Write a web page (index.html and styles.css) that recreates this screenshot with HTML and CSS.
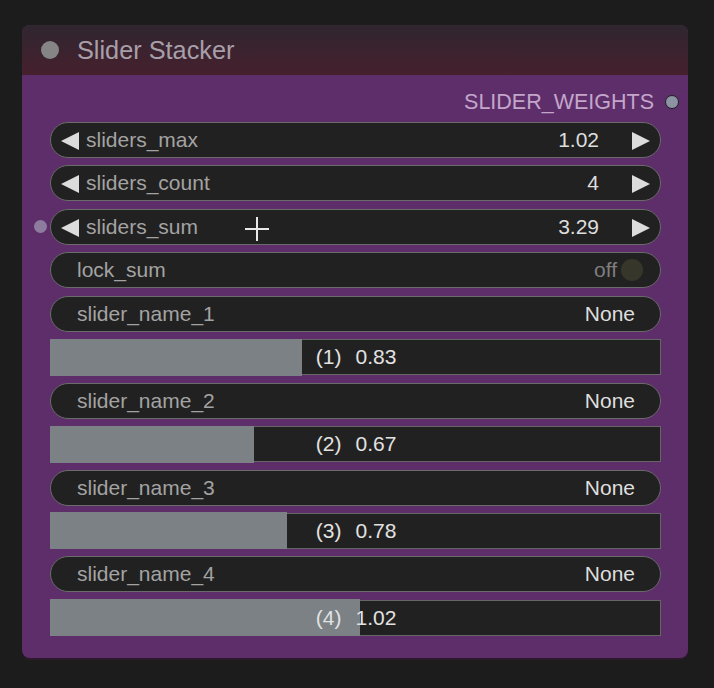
FILE: index.html
```html
<!DOCTYPE html>
<html>
<head>
<meta charset="utf-8">
<link rel="stylesheet" href="styles.css">
</head>
<body>
<div class="node">
  <div class="title">
    <span class="title-dot"></span>
    <span class="title-text">Slider Stacker</span>
  </div>
  <div class="body">
    <div class="output-row">
      <span class="output-label">SLIDER_WEIGHTS</span>
      <span class="output-dot"></span>
    </div>
    <div class="widgets">
      <div class="widget num">
        <svg class="arrow" viewBox="0 0 17 17"><polygon points="0,8.5 17,0 17,17"/></svg>
        <span class="label">sliders_max</span>
        <span class="value">1.02</span>
        <svg class="arrow" viewBox="0 0 17 17"><polygon points="17,8.5 0,0 0,17"/></svg>
      </div>
      <div class="widget num">
        <svg class="arrow" viewBox="0 0 17 17"><polygon points="0,8.5 17,0 17,17"/></svg>
        <span class="label">sliders_count</span>
        <span class="value">4</span>
        <svg class="arrow" viewBox="0 0 17 17"><polygon points="17,8.5 0,0 0,17"/></svg>
      </div>
      <div class="widget num has-input">
        <span class="input-dot"></span>
        <svg class="arrow" viewBox="0 0 17 17"><polygon points="0,8.5 17,0 17,17"/></svg>
        <span class="label">sliders_sum</span>
        <span class="value">3.29</span>
        <svg class="arrow" viewBox="0 0 17 17"><polygon points="17,8.5 0,0 0,17"/></svg>
      </div>
      <div class="widget plain">
        <span class="label">lock_sum</span>
        <span class="value off">off</span>
        <span class="toggle"></span>
      </div>
      <div class="widget plain">
        <span class="label">slider_name_1</span>
        <span class="value">None</span>
      </div>
      <div class="bar">
        <div class="fill" style="width:41.5%"></div>
        <div class="bar-text"><span class="bar-idx">(1)</span><span class="bar-val">0.83</span></div>
      </div>
      <div class="widget plain">
        <span class="label">slider_name_2</span>
        <span class="value">None</span>
      </div>
      <div class="bar">
        <div class="fill" style="width:33.5%"></div>
        <div class="bar-text"><span class="bar-idx">(2)</span><span class="bar-val">0.67</span></div>
      </div>
      <div class="widget plain">
        <span class="label">slider_name_3</span>
        <span class="value">None</span>
      </div>
      <div class="bar">
        <div class="fill" style="width:39%"></div>
        <div class="bar-text"><span class="bar-idx">(3)</span><span class="bar-val">0.78</span></div>
      </div>
      <div class="widget plain">
        <span class="label">slider_name_4</span>
        <span class="value">None</span>
      </div>
      <div class="bar">
        <div class="fill" style="width:51%"></div>
        <div class="bar-text"><span class="bar-idx">(4)</span><span class="bar-val">1.02</span></div>
      </div>
    </div>
  </div>
</div>
<svg class="cursor" viewBox="0 0 26 26"><path d="M13 1V25M1 13H25" stroke="#e8e8e8" stroke-width="2" fill="none"/></svg>
</body>
</html>
```
FILE: styles.css
```css
html, body {
  margin: 0;
  padding: 0;
}
body {
  background: #1c1c1c;
  width: 714px;
  height: 688px;
  overflow: hidden;
  font-family: "Liberation Sans", Arial, sans-serif;
  position: relative;
}
.node {
  margin: 25px 0 0 22px;
  width: 666px;
  height: 633px;
  border-radius: 8px;
  background: #5d2e6a;
  box-shadow: 0 2px 0 #2c1a2c;
  overflow: hidden;
}
.title {
  height: 50px;
  display: flex;
  align-items: center;
  padding-left: 19px;
  gap: 18px;
  background: linear-gradient(#2f2630, #46202d);
  box-sizing: border-box;
}
.title-dot {
  width: 18px;
  height: 18px;
  border-radius: 50%;
  background: #858585;
}
.title-text {
  font-size: 25.3px;
  color: #a79fa9;
  padding-top: 1px;
}
.body {
  padding: 0 27px 0 28px;
}
.output-row {
  height: 47px;
  padding-top: 7px;
  box-sizing: border-box;
  display: flex;
  align-items: center;
  justify-content: flex-end;
  margin-right: -18px;
  gap: 11px;
}
.output-label {
  font-size: 21.5px;
  color: #c4a6ca;
}
.output-dot {
  width: 12px;
  height: 12px;
  border-radius: 50%;
  background: #8d93a3;
  border: 1.5px solid #1e1e22;
}
.widgets {
  display: flex;
  flex-direction: column;
  gap: 7.45px;
}
.widget {
  height: 36px;
  box-sizing: border-box;
  border: 1.5px solid #6b6b6b;
  border-radius: 18px;
  background: #222121;
  display: flex;
  align-items: center;
  font-size: 21px;
  position: relative;
}
.widget.num {
  padding: 0 10px 0 10px;
}
.widget.plain {
  padding: 0 25px 0 26px;
}
.arrow {
  width: 18px;
  height: 18px;
  fill: #dcdcdc;
  flex: none;
  margin-top: 2px;
}
.label {
  color: #a3a3a3;
  flex: 1;
}
.num .label {
  margin-left: 7px;
}
.value {
  color: #dedede;
}
.num .value {
  margin-right: 33px;
}
.value.off {
  color: #7e7e7e;
  margin-right: 4px;
}
.toggle {
  width: 22px;
  height: 22px;
  border-radius: 50%;
  background: #36362b;
  margin-right: -8px;
}
.input-dot {
  position: absolute;
  left: -17px;
  top: 10px;
  width: 13px;
  height: 13px;
  border-radius: 50%;
  background: #8e7c9e;
}
.bar {
  height: 36px;
  box-sizing: border-box;
  border: 1.5px solid #666;
  background: #222121;
  position: relative;
  font-size: 21px;
}
.fill {
  position: absolute;
  left: -1.5px;
  top: -1.5px;
  bottom: -1.5px;
  background: #7b8185;
}
.bar-text {
  position: relative;
  height: 100%;
  display: grid;
  grid-template-columns: 1fr 1fr;
  align-items: center;
  color: #e2e2e2;
}
.bar-idx {
  text-align: right;
  padding-right: 14px;
}
.bar-val {
  text-align: left;
}
.cursor {
  position: absolute;
  left: 244px;
  top: 216px;
  width: 26px;
  height: 26px;
}
```
